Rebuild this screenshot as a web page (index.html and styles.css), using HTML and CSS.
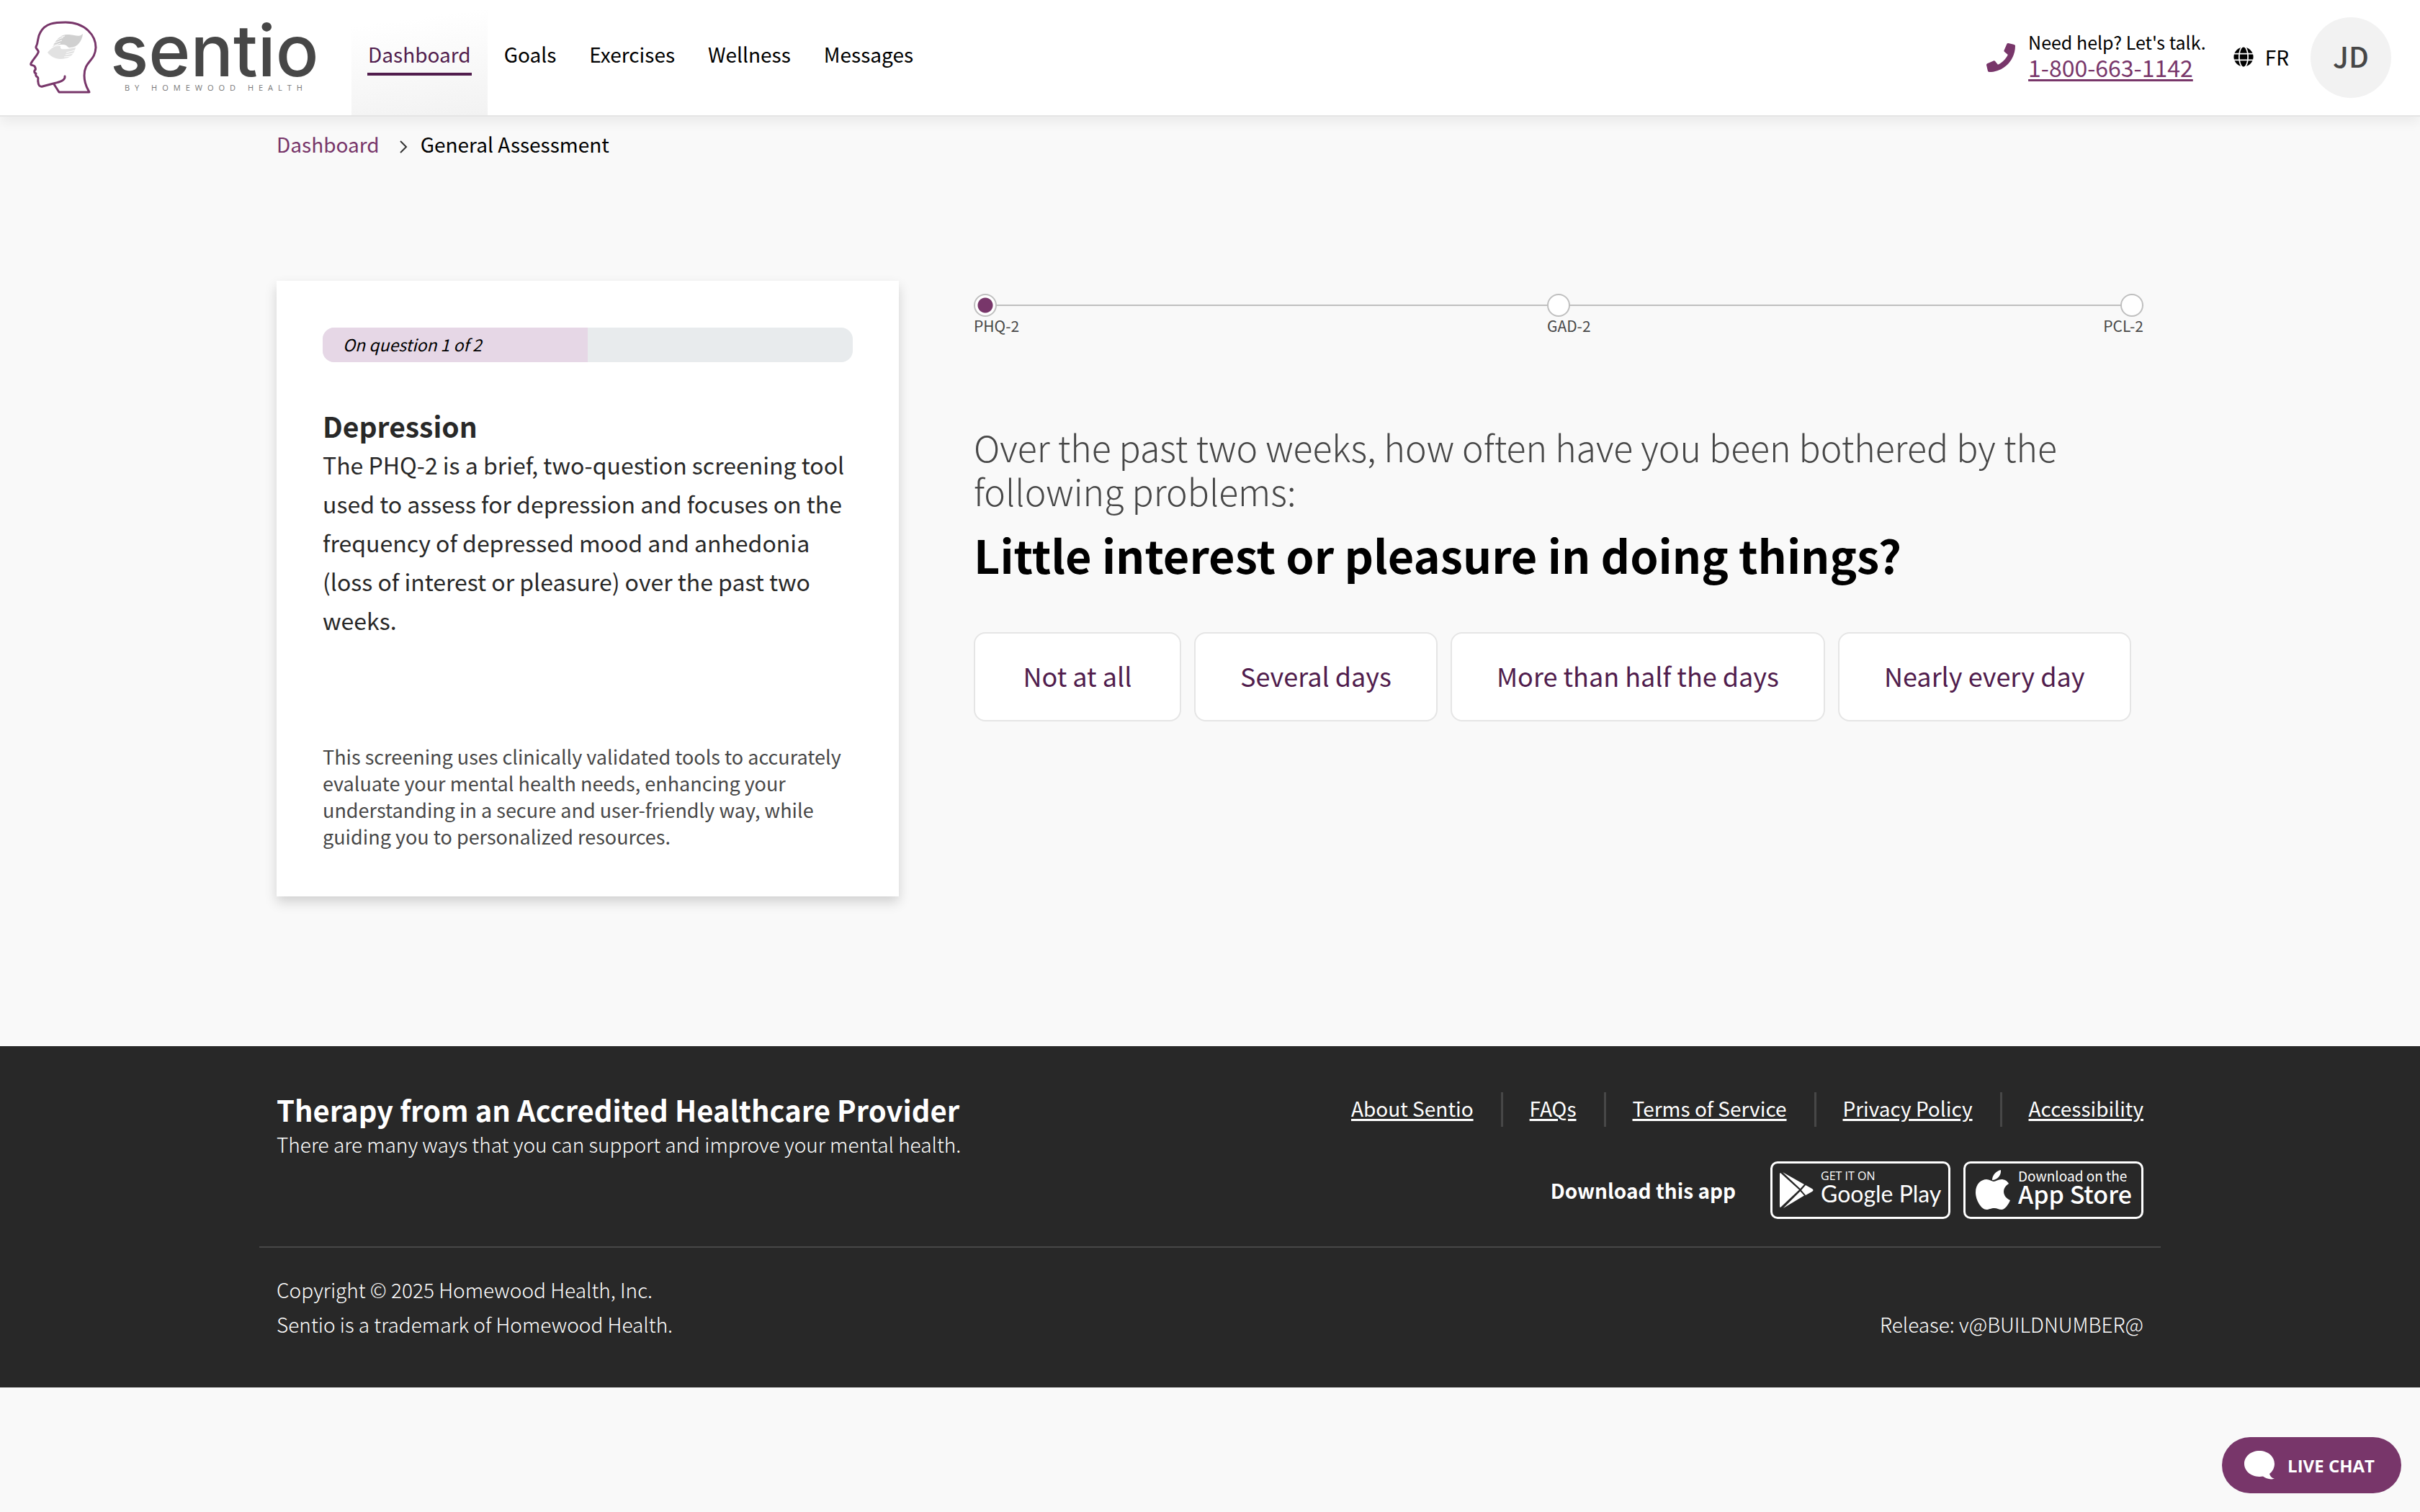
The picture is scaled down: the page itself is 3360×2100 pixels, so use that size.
FILE: index.html
```html
<!DOCTYPE html>
<html lang="en">
<head>
<meta charset="utf-8">
<title>General Assessment | Sentio</title>
<meta name="viewport" content="width=device-width, initial-scale=1">
<link rel="stylesheet" href="styles.css">
</head>
<body>
<header class="site-header">
  <a class="logo" href="#" aria-label="Sentio by Homewood Health">
    <svg class="logo-mark" viewBox="0 0 110 120" aria-hidden="true">
      <path d="M56 86 C57 92 48 94 40 96 L25 100 C21 101 19 98 19 94 C18 91 20 88 18 87 C16 86 15 84 16 82 C14 81 13 80 14 78 C17 76 15 74 14 72 C12 70 7 71 9 68 C12 62 17 58 19 53 C21 50 15 48 16 45 C20 38 17 33 22 25 C29 12 42 11 57 11 C85 11 99 30 99 46 C98 66 83 64 83 85 C83 97 87 102 90 108 H48 L41 97" fill="none" stroke="#78366a" stroke-width="3" stroke-linejoin="round" stroke-linecap="round"/>
      <path d="M39 45 C45 32 52 27 62 28 C71 29 76 32 81 27 C80 37 73 46 64 46 C59 47 60 42 54 42 C48 42 45 42 39 45 Z" fill="#d0d0d0"/>
      <path d="M32 53 C38 46 43 43 50 44 C49 50 55 48 60 48 C64 47 67 47 71 46 C70 51 66 60 57 61 C46 64 38 60 32 53 Z" fill="#e2e2e2"/>
      <path d="M40 40 L52 36 M43 36 L54 32 M47 32 L56 30 M38 44 L50 40 M70 50 L58 53 M68 54 L57 56 M65 58 L55 59" stroke="#fff" stroke-width="1"/>
    </svg>
    <span class="logo-words">
      <span class="logo-name">sentio</span>
      <span class="logo-tag">BY HOMEWOOD HEALTH</span>
    </span>
  </a>
  <nav class="main-nav" aria-label="Main">
    <a class="nav-link is-active" href="#"><span>Dashboard</span></a>
    <a class="nav-link" href="#"><span>Goals</span></a>
    <a class="nav-link" href="#"><span>Exercises</span></a>
    <a class="nav-link" href="#"><span>Wellness</span></a>
    <a class="nav-link" href="#"><span>Messages</span></a>
  </nav>
  <div class="header-tools">
    <div class="help">
      <svg class="help-icon" viewBox="0 0 512 512" aria-hidden="true"><path fill="currentColor" d="M493.400 24.600l-104-24c-11.300-2.600-22.900 3.300-27.500 13.900l-48 112c-4.200 9.800-1.400 21.300 6.900 28l60.600 49.600c-36 76.700-98.900 140.500-177.200 177.200l-49.600-60.600c-6.800-8.300-18.200-11.100-28-6.900l-112 48C3.900 366.500-2 378.100.6 389.400l24 104C27.100 504.200 36.700 512 48 512c256.100 0 464-207.500 464-464 0-11.200-7.700-20.900-18.600-23.400z"/></svg>
      <div class="help-text">
        <span>Need help? Let's talk.</span>
        <a class="help-phone" href="tel:18006631142">1-800-663-1142</a>
      </div>
    </div>
    <a class="lang" href="#">
      <svg class="lang-icon" viewBox="0 0 496 512" aria-hidden="true"><path fill="currentColor" d="M336.500 160C322 70.700 287.800 8 248 8s-74 62.700-88.500 152h177zM152 256c0 22.200 1.200 43.500 3.300 64h185.300c2.100-20.500 3.300-41.800 3.300-64s-1.200-43.500-3.300-64H155.300c-2.100 20.500-3.300 41.800-3.300 64zm324.700-96c-28.600-67.900-86.500-120.400-158-141.600 24.400 33.800 41.200 84.700 50 141.600h108zM177.200 18.400C105.800 39.600 47.800 92.100 19.300 160h108c8.700-56.900 25.500-107.800 49.900-141.600zM487.400 192H372.700c2.100 21 3.300 42.500 3.300 64s-1.200 43-3.300 64h114.600c5.500-20.500 8.600-41.800 8.600-64s-3.100-43.500-8.500-64zM120 256c0-21.500 1.200-43 3.300-64H8.600C3.200 212.500 0 233.800 0 256s3.200 43.500 8.600 64h114.600c-2-21-3.200-42.500-3.200-64zm39.500 96c14.500 89.300 48.700 152 88.500 152s74-62.700 88.500-152h-177zm159.300 141.600c71.400-21.200 129.400-73.700 158-141.600h-108c-8.800 56.900-25.600 107.800-50 141.600zM19.300 352c28.600 67.900 86.500 120.400 158 141.600-24.400-33.800-41.200-84.700-50-141.600h-108z"/></svg>
      <span>FR</span>
    </a>
    <button class="avatar" type="button" aria-label="Account menu">JD</button>
  </div>
</header>

<main class="container">
  <nav class="breadcrumb" aria-label="Breadcrumb">
    <a href="#">Dashboard</a>
    <svg class="breadcrumb-sep" viewBox="0 0 12 20" aria-hidden="true"><path d="M2 2 L10 10 L2 18" fill="none" stroke="#333" stroke-width="2"/></svg>
    <span>General Assessment</span>
  </nav>

  <div class="assessment">
    <aside class="card">
      <div class="progress" role="progressbar" aria-valuemin="0" aria-valuemax="2" aria-valuenow="1" aria-label="Questions">
        <div class="progress-fill" style="width: 50%">On question 1 of 2</div>
      </div>
      <h2 class="card-title">Depression</h2>
      <p class="card-text">The PHQ-2 is a brief, two-question screening tool used to assess for depression and focuses on the frequency of depressed mood and anhedonia (loss of interest or pleasure) over the past two weeks.</p>
      <p class="card-note">This screening uses clinically validated tools to accurately evaluate your mental health needs, enhancing your understanding in a secure and user-friendly way, while guiding you to personalized resources.</p>
    </aside>

    <section class="question">
      <ol class="steps">
        <li class="step is-current"><span class="step-dot"></span><span>PHQ-2</span></li>
        <li class="step"><span class="step-dot"></span><span>GAD-2</span></li>
        <li class="step"><span class="step-dot"></span><span>PCL-2</span></li>
      </ol>
      <p class="question-lead">Over the past two weeks, how often have you been bothered by the following problems:</p>
      <h1 class="question-title">Little interest or pleasure in doing things?</h1>
      <div class="answers">
        <button class="answer" type="button">Not at all</button>
        <button class="answer" type="button">Several days</button>
        <button class="answer" type="button">More than half the days</button>
        <button class="answer" type="button">Nearly every day</button>
      </div>
    </section>
  </div>
</main>

<footer class="site-footer">
  <div class="container footer-top">
    <div>
      <h2 class="footer-title">Therapy from an Accredited Healthcare Provider</h2>
      <p class="footer-sub">There are many ways that you can support and improve your mental health.</p>
    </div>
    <div class="footer-side">
      <ul class="footer-links">
        <li><a href="#">About Sentio</a></li>
        <li><a href="#">FAQs</a></li>
        <li><a href="#">Terms of Service</a></li>
        <li><a href="#">Privacy Policy</a></li>
        <li><a href="#">Accessibility</a></li>
      </ul>
      <div class="apps">
        <span class="apps-label">Download this app</span>
        <a class="badge badge-play" href="#">
          <svg class="play-icon" viewBox="0 0 47 50" aria-hidden="true">
            <path fill="#fff" d="M1 1 L27 24.500 L1 49 Q0 49 0 47 V3 Q0 1 1 1Z M4 0 L34 17 L28.500 23Z M36 18 L45 23 Q48 25 45 27 L36 32 L30 25Z M28.500 26.500 L34 32.500 L5 50Z"/>
          </svg>
          <span class="badge-words"><span class="badge-small">GET IT ON</span><span class="badge-big">Google Play</span></span>
        </a>
        <a class="badge badge-apple" href="#">
          <svg class="apple-icon" viewBox="0 0 49 56" aria-hidden="true">
            <path fill="#fff" d="M35 0 C36 7 30 14 23 14 C23 7 29 1 35 0Z M25 16 C28 16 31 13 36 13 C40 13 44 15 46 19 C36 25 37 37 48 42 C46 47 41 55 36 55 C32 55 30 53 26 53 C21 53 19 55 15 55 C8 55 0 42 0 31 C0 19 8 13 15 13 C19 13 23 16 25 16Z"/>
          </svg>
          <span class="badge-words"><span class="badge-small">Download on the</span><span class="badge-big">App Store</span></span>
        </a>
      </div>
    </div>
  </div>
  <div class="container footer-bottom">
    <p>Copyright © 2025 Homewood Health, Inc.<br>Sentio is a trademark of Homewood Health.</p>
    <p>Release: v@BUILDNUMBER@</p>
  </div>
</footer>

<button class="chat" type="button">
  <svg class="chat-icon" viewBox="0 0 42 40" aria-hidden="true"><path fill="#fff" d="M21 0 C33 0 42 8 42 18 C42 24 39 29 35 32 C36 35 38 38 42 38.500 C36 41 30 38 26 35.500 C10 38 0 28 0 18 C0 8 9 0 21 0Z"/></svg>
  <span>LIVE CHAT</span>
</button>
</body>
</html>
```
FILE: styles.css
```css
* {
  box-sizing: border-box;
}

body {
  margin: 0;
  background: #f9f9f9;
  color: #000;
  font-family: "Noto Sans CJK SC", "Noto Sans", sans-serif;
  font-size: 28px;
  line-height: 48px;
}

h1, h2, p, ul, ol {
  margin: 0;
  padding: 0;
}

ul, ol {
  list-style: none;
}

button {
  border: 0;
  font-family: inherit;
  cursor: pointer;
}

.container {
  max-width: 2640px;
  margin: 0 auto;
  padding: 0 24px;
}

/* Header */

.site-header {
  display: flex;
  height: 162px;
  padding: 0 40px 0 34px;
  background: #fff;
  border-bottom: 2px solid #e5e5e5;
  box-shadow: 0 8px 16px rgba(0, 0, 0, 0.06);
}

.logo {
  display: flex;
  align-items: center;
  width: 454px;
  color: #474747;
  text-decoration: none;
}

.logo-mark {
  width: 110px;
  height: 120px;
}

.logo-words {
  display: flex;
  flex-direction: column;
  padding: 0 0 4px 9px;
}

.logo-name {
  font-family: Inter, sans-serif;
  font-size: 99px;
  font-weight: 500;
  line-height: 88px;
}

.logo-tag {
  padding-left: 20px;
  color: #777;
  font-family: "Open Sans", sans-serif;
  font-size: 11px;
  letter-spacing: 7px;
  line-height: 16px;
  white-space: nowrap;
}

.main-nav {
  display: flex;
}

.nav-link {
  padding: 51px 22px 0;
  color: #000;
  text-decoration: none;
}

.nav-link span {
  display: block;
  padding: 0 1px 2px;
}

.nav-link.is-active {
  background: linear-gradient(172deg, #fff 20%, #f2f2f2);
  color: #511d4d;
}

.nav-link.is-active span {
  border-bottom: 4px solid #511d4d;
}

.header-tools {
  display: flex;
  align-items: center;
  margin-left: auto;
}

.help {
  display: flex;
  align-items: center;
  gap: 18px;
  margin-right: 38px;
}

.help-icon {
  width: 40px;
  height: 40px;
  color: #78366a;
}

.help-text {
  display: flex;
  flex-direction: column;
  padding-bottom: 8px;
  font-size: 25px;
  line-height: 35px;
}

.help-phone {
  color: #78366a;
  font-size: 32px;
  text-decoration-thickness: 3px;
  text-underline-offset: 3px;
}

.lang {
  display: flex;
  align-items: center;
  gap: 16px;
  margin-right: 30px;
  padding-bottom: 2px;
  color: #000;
  text-decoration: none;
}

.lang-icon {
  width: 28px;
  height: 28px;
}

.avatar {
  width: 112px;
  height: 112px;
  padding: 0 0 6px;
  border-radius: 50%;
  background: #f2f2f2;
  color: #474747;
  font-size: 40px;
  font-weight: 500;
}

/* Breadcrumb */

.breadcrumb {
  display: flex;
  align-items: center;
  padding-top: 14px;
}

.breadcrumb a {
  color: #78366a;
  text-decoration: none;
}

.breadcrumb-sep {
  width: 12px;
  height: 20px;
  margin: 8px 18px 0 27px;
}

/* Assessment */

.assessment {
  display: grid;
  grid-template-columns: 1fr 2fr;
  align-items: start;
  padding: 166px 0 208px;
}

.card {
  padding: 65px 64px;
  background: #fff;
  box-shadow: 0 8px 16px rgba(0, 0, 0, 0.16);
  color: #282828;
}

.progress {
  height: 48px;
  overflow: hidden;
  border-radius: 16px;
  background: #e8ebed;
}

.progress-fill {
  height: 100%;
  padding-left: 28px;
  background: #e6d7e6;
  color: #000;
  font-size: 23px;
  font-style: italic;
  line-height: 46px;
}

.card-title {
  padding-top: 62px;
  font-size: 39px;
  font-weight: 700;
  line-height: 53px;
}

.card-text {
  font-size: 32px;
  line-height: 54px;
}

.card-note {
  padding-top: 144px;
  color: #474747;
  font-size: 27px;
  line-height: 37px;
}

.question {
  padding: 18px 0 0 104px;
}

.steps {
  display: flex;
  justify-content: space-between;
  background: linear-gradient(#bfbfbf, #bfbfbf) 0 15px / 100% 2px no-repeat;
  color: #474747;
  font-size: 21px;
  line-height: 24px;
}

.step {
  display: flex;
  flex-direction: column;
  width: 32px;
  white-space: nowrap;
}

.step:last-child {
  align-items: flex-end;
}

.step-dot {
  width: 32px;
  height: 32px;
  border: 2px solid #bfbfbf;
  border-radius: 50%;
  background: #fff;
}

.is-current .step-dot {
  background: radial-gradient(circle, #78366a 10px, #fff 11px);
}

.question-lead {
  padding-top: 126px;
  color: #474747;
  font-size: 50px;
  font-weight: 300;
  line-height: 61px;
}

.question-title {
  padding-top: 18px;
  font-size: 63px;
  font-weight: 700;
  line-height: 80px;
}

.answers {
  display: flex;
  flex-wrap: wrap;
  gap: 18px;
  padding-top: 68px;
}

.answer {
  min-width: 288px;
  height: 124px;
  padding: 0 62px 4px;
  border: 2px solid #e5e5e5;
  border-radius: 16px;
  background: #fff;
  color: #511d4d;
  font-size: 36px;
}

/* Footer */

.site-footer {
  background: #282828;
  color: #fff;
}

.footer-top {
  display: flex;
  justify-content: space-between;
  padding-top: 64px;
  padding-bottom: 38px;
  border-bottom: 2px solid #474747;
}

.footer-title {
  font-size: 40px;
  font-weight: 700;
  line-height: 48px;
}

.footer-sub {
  font-weight: 300;
}

.footer-side {
  display: flex;
  flex-direction: column;
  align-items: flex-end;
  gap: 48px;
}

.footer-links {
  display: flex;
  line-height: 44px;
}

.footer-links li {
  padding-bottom: 4px;
}

.footer-links li + li {
  margin-left: 38px;
  padding-left: 37px;
  border-left: 3px solid #474747;
}

.footer-links a {
  color: #fff;
  text-decoration-thickness: 3px;
  text-underline-offset: 3px;
}

.apps {
  display: flex;
  align-items: center;
  gap: 18px;
}

.apps-label {
  margin-right: 30px;
  font-weight: 700;
}

.badge {
  display: flex;
  align-items: center;
  gap: 10px;
  width: 250px;
  height: 80px;
  padding-left: 10px;
  border: 3px solid #fff;
  border-radius: 10px;
  color: #fff;
  text-decoration: none;
  white-space: nowrap;
}

.badge-apple {
  padding-left: 14px;
}

.play-icon {
  width: 47px;
  height: 50px;
}

.apple-icon {
  width: 49px;
  height: 56px;
}

.badge-words {
  display: flex;
  flex-direction: column;
  padding-bottom: 8px;
}

.badge-small {
  font-size: 19px;
  line-height: 18px;
}

.badge-big {
  font-size: 34px;
  font-weight: 500;
  line-height: 32px;
}

.badge-play .badge-small {
  font-family: "Open Sans", sans-serif;
  font-size: 16px;
}

.badge-play .badge-big {
  font-family: Lato, sans-serif;
  font-size: 32px;
  font-weight: 400;
}

.footer-bottom {
  display: flex;
  justify-content: space-between;
  align-items: flex-end;
  padding-top: 34px;
  padding-bottom: 64px;
  font-weight: 300;
}

/* Live chat */

.chat {
  display: flex;
  position: fixed;
  right: 26px;
  bottom: 26px;
  align-items: center;
  gap: 18px;
  height: 78px;
  padding: 0 37px 0 31px;
  border-radius: 39px;
  background: #78366a;
  color: #fff;
  font-family: "Open Sans", sans-serif;
  font-size: 24px;
  font-weight: 700;
}

.chat-icon {
  width: 42px;
  height: 40px;
}
```
